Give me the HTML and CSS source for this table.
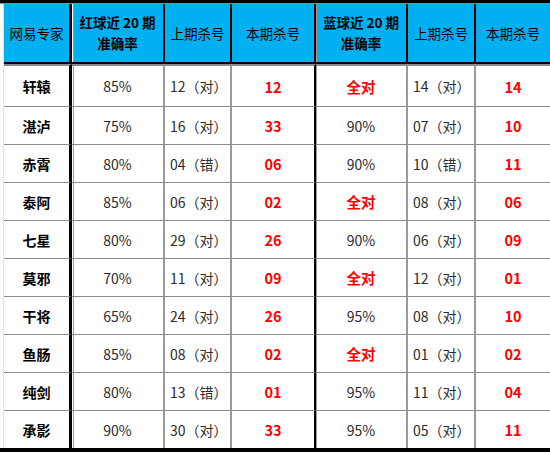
FILE: index.html
```html
<!DOCTYPE html>
<html lang="zh">
<head>
<meta charset="utf-8">
<title>网易专家杀号</title>
<link rel="stylesheet" href="styles.css">
</head>
<body>
<div class="sheet">
  <div class="topbar"></div>
  <table class="grid">
    <colgroup>
      <col class="w-name"><col class="w-rate"><col class="w-last"><col class="w-kill">
      <col class="w-brate"><col class="w-blast"><col class="w-bkill">
    </colgroup>
    <thead>
      <tr>
        <th class="c1">网易专家</th>
        <th class="c2 bold">红球近 20 期<br>准确率</th>
        <th class="c3">上期杀号</th>
        <th class="c4">本期杀号</th>
        <th class="c5 bold">蓝球近 20 期<br>准确率</th>
        <th class="c6">上期杀号</th>
        <th class="c7">本期杀号</th>
      </tr>
    </thead>
    <tbody>
      <tr class="first"><td class="c1">轩辕</td><td class="c2">85%</td><td class="c3">12（对）</td><td class="c4 red">12</td><td class="c5 red">全对</td><td class="c6">14（对）</td><td class="c7 red">14</td></tr>
      <tr><td class="c1">湛泸</td><td class="c2">75%</td><td class="c3">16（对）</td><td class="c4 red">33</td><td class="c5">90%</td><td class="c6">07（对）</td><td class="c7 red">10</td></tr>
      <tr><td class="c1">赤霄</td><td class="c2">80%</td><td class="c3">04（错）</td><td class="c4 red">06</td><td class="c5">90%</td><td class="c6">10（错）</td><td class="c7 red">11</td></tr>
      <tr><td class="c1">泰阿</td><td class="c2">85%</td><td class="c3">06（对）</td><td class="c4 red">02</td><td class="c5 red">全对</td><td class="c6">08（对）</td><td class="c7 red">06</td></tr>
      <tr><td class="c1">七星</td><td class="c2">80%</td><td class="c3">29（对）</td><td class="c4 red">26</td><td class="c5">90%</td><td class="c6">06（对）</td><td class="c7 red">09</td></tr>
      <tr><td class="c1">莫邪</td><td class="c2">70%</td><td class="c3">11（对）</td><td class="c4 red">09</td><td class="c5 red">全对</td><td class="c6">12（对）</td><td class="c7 red">01</td></tr>
      <tr><td class="c1">干将</td><td class="c2">65%</td><td class="c3">24（对）</td><td class="c4 red">26</td><td class="c5">95%</td><td class="c6">08（对）</td><td class="c7 red">10</td></tr>
      <tr><td class="c1">鱼肠</td><td class="c2">85%</td><td class="c3">08（对）</td><td class="c4 red">02</td><td class="c5 red">全对</td><td class="c6">01（对）</td><td class="c7 red">02</td></tr>
      <tr><td class="c1">纯剑</td><td class="c2">80%</td><td class="c3">13（错）</td><td class="c4 red">01</td><td class="c5">95%</td><td class="c6">11（对）</td><td class="c7 red">04</td></tr>
      <tr class="last"><td class="c1">承影</td><td class="c2">90%</td><td class="c3">30（对）</td><td class="c4 red">33</td><td class="c5">95%</td><td class="c6">05（对）</td><td class="c7 red">11</td></tr>
    </tbody>
  </table>
  <div class="bottombar"></div>
</div>
</body>
</html>
```
FILE: styles.css
```css
* { box-sizing: border-box; }
html, body { margin: 0; padding: 0; background: #fff; }
body {
  width: 550px;
  height: 452px;
  overflow: hidden;
  font-family: "Noto Sans CJK SC", "Noto Sans", sans-serif;
  font-size: 14px;
  color: #2b2b2b;
}
.sheet { width: 550px; }
.topbar {
  height: 4px;
  background: #000;
  border-bottom: 1px solid #8a8a8a;
}
.bottombar {
  height: 4px;
  background: #000;
}
.grid {
  margin-left: 3px;
  width: 547px;
  table-layout: fixed;
  border-collapse: separate;
  border-spacing: 0;
  border-left: 1px dotted #c8c8c8;
}
.w-name { width: 68px; }
.w-rate { width: 93px; }
.w-last { width: 67px; }
.w-kill { width: 84px; }
.w-brate { width: 92px; }
.w-blast { width: 68px; }
.w-bkill { width: 74px; }

th, td {
  padding: 0;
  text-align: center;
  vertical-align: middle;
  overflow: hidden;
  white-space: nowrap;
}
th {
  height: 60px;
  background: #00b0f0;
  color: #000;
  font-weight: normal;
  font-size: 13.5px;
  line-height: 21px;
  border-bottom: 2px solid #000;
  border-right: 2px solid #000;
}
th.bold { font-weight: bold; }
th.c7 { border-right: 0; }

td {
  height: 38px;
  border-bottom: 1px solid #8c8c8c;
  border-right: 2px solid #9a9a9a;
}
tr.first td {
  height: 43px;
  border-top: 2px solid #8a8a8a;
}
tr.last td {
  height: 37px;
  border-bottom: 0;
}
td.c7 { border-right: 0; }

.c1 { border-right: 3px solid #000 !important; }
td.c1 { color: #000; font-weight: bold; }
.c2 { box-shadow: inset 1px 0 0 #fff, inset 2px 0 0 #999; }
.c4 { border-right: 2px solid #000 !important; }
.c5 { box-shadow: inset 1px 0 0 #9a9a9a; }
td.c3, td.c6 { text-align: left; padding-left: 5px; }
td.red {
  color: #ff0000;
  font-weight: bold;
  font-size: 14.5px;
}
```
